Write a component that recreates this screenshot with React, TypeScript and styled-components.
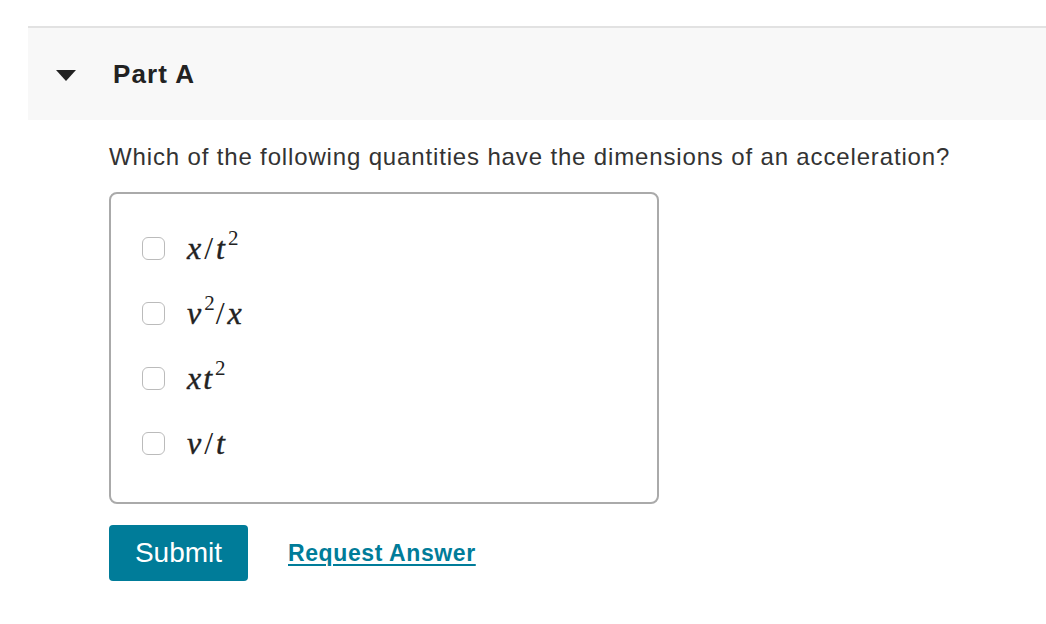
import styled, { createGlobalStyle } from 'styled-components'

const GlobalStyle = createGlobalStyle`
	body {
		margin: 0;
		background: #fff;
		font-family: 'Liberation Sans', Arial, sans-serif;
		color: #333;
	}
`

const options = [
	{ id: 'a', parts: ['x', '/', 't'], sup: '2', after: [] as string[] },
	{ id: 'b', parts: ['v'], sup: '2', after: ['/', 'x'] },
	{ id: 'c', parts: ['x', 't'], sup: '2', after: [] as string[] },
	{ id: 'd', parts: ['v', '/', 't'], sup: '', after: [] as string[] },
]

const renderParts = (parts: string[]) =>
	parts.map((p, i) => (p === '/' ? <Slash key={i}>/</Slash> : <Var key={i}>{p}</Var>))

const App: React.FC = () => {
	return (
		<>
			<GlobalStyle />
			<Page>
				<PartHeader>
					<Caret />
					<PartTitle>Part A</PartTitle>
				</PartHeader>
				<Body>
					<Question>Which of the following quantities have the dimensions of an acceleration?</Question>
					<Choices>
						{options.map((o) => (
							<Choice key={o.id}>
								<Box type="checkbox" />
								<Math>
									{renderParts(o.parts)}
									{o.sup && <sup>{o.sup}</sup>}
									{renderParts(o.after)}
								</Math>
							</Choice>
						))}
					</Choices>
					<Actions>
						<SubmitButton>Submit</SubmitButton>
						<RequestLink href="#">Request Answer</RequestLink>
					</Actions>
				</Body>
			</Page>
		</>
	)
}

export default App

const Page = styled.div`
	padding: 26px 0 0 28px;
`
const PartHeader = styled.div`
	display: flex;
	align-items: center;
	height: 94px;
	padding-left: 28px;
	background: #f8f8f8;
	border-top: 2px solid #e2e2e2;
	box-sizing: border-box;
`
const Caret = styled.span`
	width: 0;
	height: 0;
	border-left: 10px solid transparent;
	border-right: 10px solid transparent;
	border-top: 11px solid #222;
	margin-right: 37px;
	margin-top: 2px;
`
const PartTitle = styled.h2`
	margin: 0;
	font-size: 26px;
	letter-spacing: 1.1px;
	font-weight: 700;
	color: #222;
`
const Body = styled.div`
	padding-left: 81px;
`
const Question = styled.p`
	margin: 23px 0 0;
	font-size: 24px;
	letter-spacing: 0.85px;
	line-height: 28px;
`
const Choices = styled.div`
	width: 550px;
	height: 312px;
	margin-top: 21px;
	padding-top: 22px;
	box-sizing: border-box;
	border: 2px solid #aaa;
	border-radius: 8px;
	display: flex;
	flex-direction: column;
`
const Choice = styled.label`
	display: flex;
	align-items: center;
	height: 65px;
	padding-left: 31px;
`
const Box = styled.input`
	appearance: none;
	margin: 0 22px 0 0;
	width: 23px;
	height: 23px;
	border: 1px solid #bbb;
	border-radius: 6px;
	background: #fff;
	box-sizing: border-box;
`
const Math = styled.span`
	font-family: 'Liberation Serif', 'DejaVu Serif', serif;
	font-style: italic;
	font-size: 32px;
	color: #222;
	display: inline-flex;
	align-items: baseline;
	-webkit-text-stroke: 0.4px #222;

	sup {
		font-style: normal;
		font-size: 21px;
		line-height: 0;
		position: relative;
		top: -14px;
		margin-left: 1px;
		-webkit-text-stroke: 0;
	}
`
const Var = styled.span`
	margin-right: 2px;
`
const Slash = styled.span`
	font-style: normal;
	margin: 0 3px 0 1px;
	-webkit-text-stroke: 0;
`
const Actions = styled.div`
	display: flex;
	align-items: center;
	gap: 40px;
	margin-top: 21px;
`
const SubmitButton = styled.button`
	width: 139px;
	height: 56px;
	padding: 0;
	border: none;
	border-radius: 4px;
	background: #007c99;
	color: #fff;
	font-family: 'Liberation Sans', Arial, sans-serif;
	font-size: 28px;
`
const RequestLink = styled.a`
	color: #007c99;
	font-size: 23px;
	letter-spacing: 0.6px;
	font-weight: 700;
	text-decoration: underline;
	text-underline-offset: 3px;
`
